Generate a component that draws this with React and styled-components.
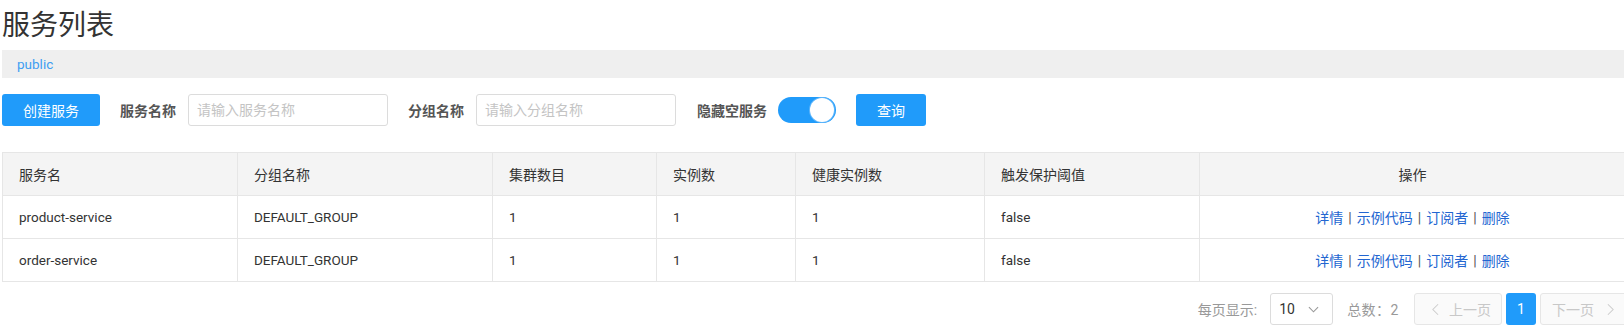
import React from 'react';
import styled, { createGlobalStyle } from 'styled-components';

const GlobalStyle = createGlobalStyle`
  html, body {
    margin: 0;
    padding: 0;
    background: #fff;
    overflow: hidden;
  }
  body {
    font-family: Roboto, "Noto Sans CJK SC", sans-serif;
    color: #333;
  }
  * {
    box-sizing: border-box;
  }
`;

const Page = styled.div`
  width: 1630px;
  margin-left: 2px;
  padding-top: 8px;
`;

const Title = styled.h1`
  margin: 0 0 6px;
  font-size: 28px;
  line-height: 36px;
  font-weight: 400;
  color: #333;
`;

const NamespaceBar = styled.div`
  height: 28px;
  background: #efefef;
  display: flex;
  align-items: center;
  padding-left: 15px;
`;

const NamespaceLink = styled.span`
  font-size: 13.5px;
  color: #3d9ef2;
  cursor: pointer;
`;

const Toolbar = styled.div`
  margin-top: 16px;
  height: 32px;
  display: flex;
  align-items: center;
`;

const Button = styled.button`
  height: 32px;
  padding: 0 21px;
  border: none;
  border-radius: 3px;
  background: #209bfa;
  color: #fff;
  font-family: inherit;
  font-size: 14px;
  cursor: pointer;
`;

const FieldLabel = styled.label`
  margin: 0 ${(p) => p.$gap || 12}px 0 ${(p) => p.$lead || 20}px;
  font-size: 14px;
  font-weight: 700;
  color: #555;
  white-space: nowrap;
`;

const TextInput = styled.input`
  width: 200px;
  height: 32px;
  padding: 0 8px;
  border: 1px solid #dcdcdc;
  border-radius: 3px;
  font-family: inherit;
  font-size: 14px;
  color: #333;
  outline: none;

  &::placeholder {
    color: #c4c4c4;
  }
`;

const Switch = styled.div`
  position: relative;
  width: 58px;
  height: 26px;
  margin-right: 20px;
  border-radius: 13px;
  background: #209bfa;
  cursor: pointer;
`;

const SwitchKnob = styled.span`
  position: absolute;
  top: 1px;
  right: 2px;
  width: 24px;
  height: 24px;
  border-radius: 50%;
  background: #fff;
  box-shadow: 0 0 0 1px #5fb6fb;
`;

const Table = styled.table`
  margin-top: 26px;
  width: 1623px;
  border-collapse: collapse;
  table-layout: fixed;
`;

const HeadCell = styled.th`
  height: 43px;
  padding: 0 16px;
  border: 1px solid #e6e6e6;
  background: #f4f4f4;
  font-size: 14px;
  font-weight: 400;
  color: #333;
  text-align: ${(p) => (p.$center ? 'center' : 'left')};
`;

const Cell = styled.td`
  height: 43px;
  padding: 0 16px;
  border: 1px solid #e6e6e6;
  font-size: ${(p) => (p.$center ? 14 : 13.5)}px;
  color: #333;
  text-align: ${(p) => (p.$center ? 'center' : 'left')};
  white-space: nowrap;
`;

const ActionLink = styled.a`
  color: #2366d1;
  text-decoration: none;
  cursor: pointer;
`;

const Divider = styled.span`
  margin: 0 5px;
  color: #555;
`;

const Pagination = styled.div`
  margin-top: 11px;
  height: 32px;
  display: flex;
  justify-content: flex-end;
  align-items: center;
  font-size: 14px;
  color: #999;
`;

const PageSizeSelect = styled.div`
  width: 63px;
  height: 32px;
  margin: 0 14px 0 13px;
  padding: 0 13px 0 8px;
  display: flex;
  align-items: center;
  justify-content: space-between;
  border: 1px solid #dcdcdc;
  border-radius: 3px;
  color: #333;
  font-size: 14px;
`;

const Total = styled.span`
  margin-right: 15px;
  letter-spacing: 0.5px;
`;

const PagerButton = styled.button`
  height: 32px;
  padding: ${(p) => (p.$prev ? '0 10px 0 17px' : '0 17px 0 11px')};
  display: flex;
  align-items: center;
  gap: ${(p) => (p.$prev ? 10 : 13)}px;
  border: 1px solid #e6e6e6;
  border-radius: 3px;
  background: #fafafa;
  color: #c8c8c8;
  font-family: inherit;
  font-size: 14px;
`;

const PageNumber = styled.button`
  width: 30px;
  height: 32px;
  margin: 0 4px;
  border: none;
  border-radius: 3px;
  background: #209bfa;
  color: #fff;
  font-family: inherit;
  font-size: 14px;
`;

const columns = [
  { title: '服务名', width: 235 },
  { title: '分组名称', width: 255 },
  { title: '集群数目', width: 164 },
  { title: '实例数', width: 139 },
  { title: '健康实例数', width: 189 },
  { title: '触发保护阈值', width: 215 },
  { title: '操作', width: 426, center: true },
];

const services = [
  { name: 'product-service', group: 'DEFAULT_GROUP', clusters: 1, instances: 1, healthy: 1, protect: 'false' },
  { name: 'order-service', group: 'DEFAULT_GROUP', clusters: 1, instances: 1, healthy: 1, protect: 'false' },
];

const actions = ['详情', '示例代码', '订阅者', '删除'];

const Chevron = ({ dir, color, size = 12 }) => {
  const points = {
    down: '1,1 6,6 11,1',
    left: '7,1 1,7 7,13',
    right: '1,1 7,7 1,13',
  }[dir];
  const box = dir === 'down' ? '0 0 12 7' : '0 0 8 14';
  return (
    <svg width={dir === 'down' ? size : 7} height={dir === 'down' ? 7 : 13} viewBox={box}>
      <polyline points={points} fill="none" stroke={color} strokeWidth="1.2" />
    </svg>
  );
};

const App = () => (
  <>
    <GlobalStyle />
    <Page>
      <Title>服务列表</Title>
      <NamespaceBar>
        <NamespaceLink>public</NamespaceLink>
      </NamespaceBar>

      <Toolbar>
        <Button>创建服务</Button>
        <FieldLabel $gap={12}>服务名称</FieldLabel>
        <TextInput placeholder="请输入服务名称" />
        <FieldLabel>分组名称</FieldLabel>
        <TextInput placeholder="请输入分组名称" />
        <FieldLabel $lead={21} $gap={11}>隐藏空服务</FieldLabel>
        <Switch>
          <SwitchKnob />
        </Switch>
        <Button>查询</Button>
      </Toolbar>

      <Table>
        <colgroup>
          {columns.map((c) => (
            <col key={c.title} style={{ width: c.width }} />
          ))}
        </colgroup>
        <thead>
          <tr>
            {columns.map((c) => (
              <HeadCell key={c.title} $center={c.center}>
                {c.title}
              </HeadCell>
            ))}
          </tr>
        </thead>
        <tbody>
          {services.map((s) => (
            <tr key={s.name}>
              <Cell>{s.name}</Cell>
              <Cell>{s.group}</Cell>
              <Cell>{s.clusters}</Cell>
              <Cell>{s.instances}</Cell>
              <Cell>{s.healthy}</Cell>
              <Cell>{s.protect}</Cell>
              <Cell $center>
                {actions.map((a, i) => (
                  <React.Fragment key={a}>
                    {i > 0 && <Divider>|</Divider>}
                    <ActionLink>{a}</ActionLink>
                  </React.Fragment>
                ))}
              </Cell>
            </tr>
          ))}
        </tbody>
      </Table>

      <Pagination>
        <span>每页显示:</span>
        <PageSizeSelect>
          <span>10</span>
          <Chevron dir="down" color="#999" size={11} />
        </PageSizeSelect>
        <Total>总数：2</Total>
        <PagerButton $prev disabled>
          <Chevron dir="left" color="#ccc" />
          上一页
        </PagerButton>
        <PageNumber>1</PageNumber>
        <PagerButton disabled>
          下一页
          <Chevron dir="right" color="#ccc" />
        </PagerButton>
      </Pagination>
    </Page>
  </>
);

export default App;
